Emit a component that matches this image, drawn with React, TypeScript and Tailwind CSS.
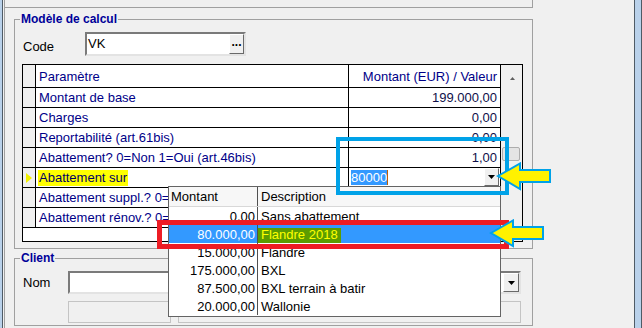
import React from 'react';

const rows = [
  { label: 'Montant de base', value: '199.000,00' },
  { label: 'Charges', value: '0,00' },
  { label: 'Reportabilité (art.61bis)', value: '0,00' },
  { label: 'Abattement? 0=Non 1=Oui (art.46bis)', value: '1,00' },
  { label: 'Abattement sur', value: '', edit: true },
  { label: 'Abattement suppl.? 0=Non 1=Oui', value: '0,00', under: true },
  { label: 'Abattement rénov.? 0=Non 1=Oui', value: '0,00', under: true },
];

const options = [
  { amount: '0,00', desc: 'Sans abattement' },
  { amount: '80.000,00', desc: 'Flandre 2018', selected: true },
  { amount: '15.000,00', desc: 'Flandre' },
  { amount: '175.000,00', desc: 'BXL' },
  { amount: '87.500,00', desc: 'BXL terrain à batir' },
  { amount: '20.000,00', desc: 'Wallonie' },
];

const DownTriangle = () => (
  <svg width="7" height="4" viewBox="0 0 7 4">
    <polygon points="0,0 7,0 3.5,4" fill="#000" />
  </svg>
);

const ComboButton = ({ className = '' }: { className?: string }) => (
  <div
    className={`flex items-center justify-center bg-[#f0f0f0] border border-t-white border-l-white border-r-[#696969] border-b-[#696969] ${className}`}
  >
    <DownTriangle />
  </div>
);

const Arrow = ({ className }: { className: string }) => (
  <svg className={className} width="56" height="30" viewBox="0 0 56 30">
    <polygon
      points="2,14 24,1.5 24,8 54,8 54,20 24,20 24,27 2,14"
      fill="#fff200"
      stroke="#00a2e8"
      strokeWidth="2"
      strokeLinejoin="miter"
    />
  </svg>
);

export default function App() {
  return (
    <div className="relative flex w-[642px] h-[328px] overflow-hidden bg-[#f0f0f0] font-['Liberation_Sans',Arial,sans-serif] text-[13px] text-black">
      {/* left window edge */}
      <div className="w-[2px] bg-[#b9d1ea]" />
      <div className="w-px bg-[#4f5b66]" />
      <div className="w-px" />

      {/* main panel */}
      <div className="flex w-[529px] flex-col border-l border-[#a0a0a0]">
        <div className="h-[8px] border-b border-r border-[#a0a0a0]" />

        {/* Modèle de calcul */}
        <div className="relative ml-[9px] mt-[11px] h-[230px] border border-[#a0a0a0]">
          <div className="absolute -top-[8px] left-[5px] bg-[#f0f0f0] px-px text-[12px] font-bold leading-[14px] text-[#000099]">
            Modèle de calcul
          </div>

          <div className="ml-[8px] mt-[12px] flex">
            <div className="flex h-[24px] w-[62px] items-center pt-[5px]">Code</div>
            <div className="flex h-[24px] w-[161px] border-2 border-t-[#7a7a7a] border-l-[#7a7a7a] border-r-[#e3e3e3] border-b-[#e3e3e3] bg-white">
              <div className="flex flex-1 items-center pl-px">VK</div>
              <div className="flex w-[15px] items-center justify-center bg-[#f0f0f0] border border-t-white border-l-white border-r-[#696969] border-b-[#696969] text-[12px] font-bold leading-none pb-[4px]">
                ...
              </div>
            </div>
          </div>

          {/* grid */}
          <div className="ml-[7px] mt-[8px] flex h-[178px] w-[501px] border border-black bg-white">
            <div className="flex w-[478px] flex-col">
              <div className="flex h-[23px] border-b border-black text-[#000088]">
                <div className="w-[13px] border-r border-black bg-[#f0f0f0]" />
                <div className="flex w-[313px] items-center border-r border-black pl-[3px] pt-[2px]">Paramètre</div>
                <div className="flex w-[152px] items-center justify-end border-r border-black pr-[3px] pt-[2px]">
                  Montant (EUR) / Valeur
                </div>
              </div>
              {rows.map((r) => (
                <div key={r.label} className="flex h-[20px] border-b border-black">
                  <div className="flex w-[13px] items-center border-r border-black bg-[#f0f0f0] pl-[3px]">
                    {r.edit && (
                      <svg width="6" height="10" viewBox="0 0 6 10">
                        <polygon points="0,0 6,5 0,10" fill="#f2f200" />
                      </svg>
                    )}
                  </div>
                  <div className="flex w-[313px] items-center overflow-hidden whitespace-nowrap border-r border-black pl-[2px] text-[#000088]">
                    {r.edit ? (
                      <span className="bg-[#ffff00] px-px leading-[16px] text-[#000060]">{r.label}</span>
                    ) : r.under ? (
                      <span className="w-[130px] overflow-hidden pl-px">{r.label}</span>
                    ) : (
                      <span className="pl-px">{r.label}</span>
                    )}
                  </div>
                  {r.edit ? (
                    <div className="flex w-[152px] items-center border-r border-black pl-[2px]">
                      <span className="bg-[#3399ff] leading-[15px] text-white">80000</span>
                      <span className="h-[15px] w-px bg-[#c06000]" />
                      <ComboButton className="ml-auto mr-px h-[18px] w-[15px] self-start" />
                    </div>
                  ) : r.under ? (
                    <div className="w-[152px] border-r border-black" />
                  ) : (
                    <div className="flex w-[152px] items-center justify-end border-r border-black pr-[3px] text-[#10104a]">
                      {r.value}
                    </div>
                  )}
                </div>
              ))}
              <div className="flex-1" />
            </div>

            {/* vertical scrollbar */}
            <div className="flex w-[21px] flex-col bg-[#f0f0f0]">
              <div className="flex h-[26px] items-center justify-center pl-px">
                <svg width="5" height="3" viewBox="0 0 5 3">
                  <polygon points="0,3 5,3 2.5,0" fill="#606060" />
                </svg>
              </div>
              <div className="ml-px mt-[56px] h-[14px] w-[18px] rounded-[2px] border border-[#adadad] bg-[#e4e4e4]" />
            </div>
          </div>
        </div>

        {/* Client */}
        <div className="relative ml-[9px] mt-[9px] h-[68px] border border-[#a0a0a0]">
          <div className="absolute -top-[8px] left-[5px] bg-[#f0f0f0] px-px text-[12px] font-bold leading-[14px] text-[#000099]">
            Client
          </div>
          <div className="ml-[8px] mt-[12px] flex items-center">
            <div className="w-[45px]">Nom</div>
            <div className="flex h-[23px] w-[453px] justify-end border-2 border-t-[#7a7a7a] border-l-[#7a7a7a] border-r-[#e3e3e3] border-b-[#e3e3e3] bg-white">
              <ComboButton className="h-full w-[16px]" />
            </div>
          </div>
          <div className="ml-[53px] mt-[7px] flex gap-[7px]">
            <div className="h-[22px] w-[103px] border border-[#c4c4c4] bg-[#f0f0f0]" />
            <div className="h-[22px] w-[343px] border border-[#c4c4c4] bg-[#f0f0f0]" />
          </div>
        </div>
      </div>

      <div className="flex-1" />

      {/* right window edge */}
      <div className="w-px bg-[#4f5b66]" />
      <div className="w-[6px] bg-[#b9d1ea]" />
      <div className="w-px bg-[#4f5b66]" />

      {/* open dropdown list */}
      <div className="absolute left-[168px] top-[186px] flex h-[131px] w-[333px] flex-col border border-[#646464] bg-white">
        <div className="flex h-[20px] border-b border-[#d8d8d8] bg-[#f7f7f7]">
          <div className="flex w-[89px] items-center border-r border-[#505050] pl-[2px]">Montant</div>
          <div className="flex flex-1 items-center pl-[3px]">Description</div>
        </div>
        {options.map((o) => (
          <div key={o.amount} className={`flex h-[18px] ${o.selected ? 'bg-[#3399ff] text-white' : ''}`}>
            <div className="flex w-[89px] items-center justify-end border-r border-[#505050] pr-[2px] pt-[2px]">
              {o.amount}
            </div>
            <div className="flex flex-1 items-center pt-[2px]">
              {o.selected ? (
                <span className="flex h-[15px] items-center bg-[#5b9c00] pl-[3px] pr-[3px] text-[#ffff00]">{o.desc}</span>
              ) : (
                <span className="pl-[3px]">{o.desc}</span>
              )}
            </div>
          </div>
        ))}
      </div>

      {/* annotations */}
      <div className="absolute left-[336px] top-[137px] h-[58px] w-[173px] border-[4px] border-[#00a2e8]" />
      <div className="absolute left-[157px] top-[220px] h-[29px] w-[352px] border-[5px] border-[#ed1c24]" />
      <Arrow className="absolute left-[496px] top-[162px]" />
      <Arrow className="absolute left-[489px] top-[219px]" />
    </div>
  );
}
